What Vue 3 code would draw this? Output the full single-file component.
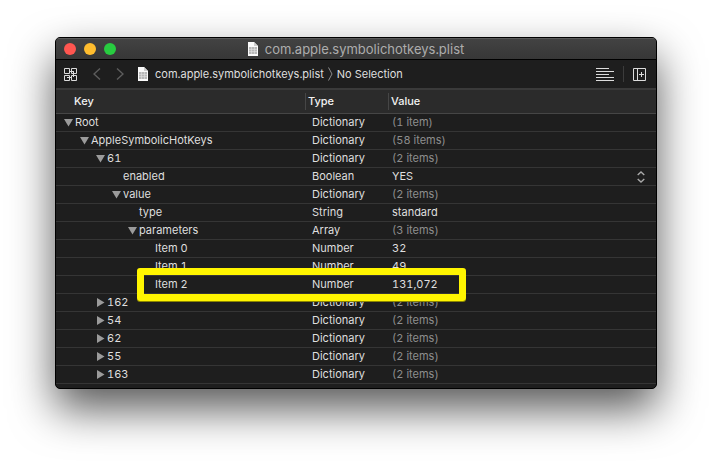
<script setup>
import { computed, reactive, ref } from 'vue'

const fileName = 'com.apple.symbolichotkeys.plist'

const nodes = reactive([
  { key: 'Root', level: 0, type: 'Dictionary', value: '(1 item)', open: true },
  { key: 'AppleSymbolicHotKeys', level: 1, type: 'Dictionary', value: '(58 items)', open: true },
  { key: '61', level: 2, type: 'Dictionary', value: '(2 items)', open: true },
  { key: 'enabled', level: 3, type: 'Boolean', value: 'YES' },
  { key: 'value', level: 3, type: 'Dictionary', value: '(2 items)', open: true },
  { key: 'type', level: 4, type: 'String', value: 'standard' },
  { key: 'parameters', level: 4, type: 'Array', value: '(3 items)', open: true },
  { key: 'Item 0', level: 5, type: 'Number', value: '32' },
  { key: 'Item 1', level: 5, type: 'Number', value: '49' },
  { key: 'Item 2', level: 5, type: 'Number', value: '131,072', marked: true },
  { key: '162', level: 2, type: 'Dictionary', value: '(2 items)', open: false },
  { key: '54', level: 2, type: 'Dictionary', value: '(2 items)', open: false },
  { key: '62', level: 2, type: 'Dictionary', value: '(2 items)', open: false },
  { key: '55', level: 2, type: 'Dictionary', value: '(2 items)', open: false },
  { key: '163', level: 2, type: 'Dictionary', value: '(2 items)', open: false },
])

const enabled = ref('YES')

const isGroup = (node) => node.open !== undefined

// Rows below a closed group stay hidden until the level returns to the group's own.
const rows = computed(() => {
  const visible = []
  let closedAt = Infinity
  for (const node of nodes) {
    if (node.level > closedAt) continue
    closedAt = node.open === false ? node.level : Infinity
    visible.push(node)
  }
  return visible
})
</script>

<template>
  <main class="window">
    <header class="titlebar">
      <div class="lights">
        <button class="light close" aria-label="Close"></button>
        <button class="light minimize" aria-label="Minimize"></button>
        <button class="light zoom" aria-label="Zoom"></button>
      </div>
      <h1 class="title">
        <svg class="doc" viewBox="0 0 10 14" aria-hidden="true">
          <path d="M0 0h6l4 4v10H0z" fill="#fafafa" />
          <path d="M6 0v4h4z" fill="#cfcfcf" />
          <path d="M1 5h8v7H1z" fill="#b8b8b8" />
          <path d="M1 7.500h8M1 9.500h8M3.500 5v7M6.500 5v7" stroke="#e0e0e0" stroke-width=".6" />
        </svg>
        {{ fileName }}
      </h1>
    </header>

    <nav class="toolbar">
      <button class="tool" aria-label="Related items">
        <svg width="13" height="13" viewBox="0 0 13 13" fill="none" stroke="#dcdcdc">
          <path d="M.5.5h5v5h-5zM7.5.5h5v5h-5zM.5 7.5h5v5h-5zM7.5 7.5h5v5h-5zM5 3.5h4M3 9.5h5M9.500 3v6" />
        </svg>
      </button>
      <button class="tool back" aria-label="Go back">
        <svg width="8" height="12" viewBox="0 0 8 12" fill="none" stroke="#5c5c5c" stroke-width="1.4">
          <path d="M7 .5 1 6l6 5.500" />
        </svg>
      </button>
      <button class="tool forward" aria-label="Go forward">
        <svg width="8" height="12" viewBox="0 0 8 12" fill="none" stroke="#5c5c5c" stroke-width="1.4">
          <path d="m1 .5 6 5.500-6 5.500" />
        </svg>
      </button>
      <a class="crumb" href="#">
        <svg class="doc" viewBox="0 0 10 14" aria-hidden="true">
          <path d="M0 0h6l4 4v10H0z" fill="#fafafa" />
          <path d="M6 0v4h4z" fill="#cfcfcf" />
          <path d="M1 5h8v7H1z" fill="#b8b8b8" />
          <path d="M1 7.500h8M1 9.500h8M3.500 5v7M6.500 5v7" stroke="#e0e0e0" stroke-width=".6" />
        </svg>
        {{ fileName }}
      </a>
      <svg class="chevron" width="5" height="14" viewBox="0 0 5 14" fill="none" stroke="#8c8c8c" aria-hidden="true">
        <path d="m.5.5 3.500 6.500-3.500 6.500" />
      </svg>
      <a class="selection" href="#">No Selection</a>
      <button class="tool lines" aria-label="Editor options">
        <svg width="18" height="13" viewBox="0 0 18 13" fill="none" stroke="#dcdcdc">
          <path d="M0 .5h13M0 3.500h18M0 6.500h13M0 9.500h18M0 12.500h18" />
        </svg>
      </button>
      <span class="divider"></span>
      <button class="tool" aria-label="Add editor">
        <svg width="13" height="13" viewBox="0 0 13 13" fill="none" stroke="#dcdcdc">
          <path d="M.5.5h12v12H.5zM4.500.5v12M6 6.500h5M8.500 4v5" />
        </svg>
      </button>
    </nav>

    <table class="plist">
      <thead>
        <tr>
          <th class="col-key"><span class="head">Key</span></th>
          <th class="col-type"><span class="head">Type</span></th>
          <th><span class="head">Value</span></th>
        </tr>
      </thead>
      <tbody>
        <tr v-for="(node, i) in rows" :key="i">
          <td class="key-cell">
            <div class="key" :style="{ paddingLeft: 8 + node.level * 16 + 'px' }">
              <button
                v-if="isGroup(node)"
                class="toggle"
                :aria-expanded="node.open"
                :aria-label="node.key"
                @click="node.open = !node.open"
              >
                <svg width="9" height="9" viewBox="0 0 9 9" fill="#9b9b9b">
                  <path v-if="node.open" d="M0 1h9L4.500 8.500z" />
                  <path v-else d="M1 0v9l7.500-4.500z" />
                </svg>
              </button>
              <span v-else class="toggle"></span>
              <span>{{ node.key }}</span>
            </div>
            <div v-if="node.marked" class="marker"></div>
          </td>
          <td class="type">{{ node.type }}</td>
          <td v-if="node.type === 'Boolean'" class="value">
            <div class="picker">
              <select v-model="enabled" :aria-label="node.key">
                <option>YES</option>
                <option>NO</option>
              </select>
              <svg width="8" height="13" viewBox="0 0 8 13" fill="none" stroke="#a8a8a8" stroke-width="1.4" aria-hidden="true">
                <path d="M.7 5 4 2l3.300 3M.7 9 4 12l3.300-3" />
              </svg>
            </div>
          </td>
          <td v-else class="value" :class="{ count: isGroup(node) }">{{ node.value }}</td>
        </tr>
      </tbody>
    </table>
  </main>
</template>

<style>
body {
  background: #fff;
}
</style>

<style scoped>
.window {
  margin: 37px 55px 73px;
  padding-bottom: 4px;
  overflow: hidden;
  border: 1px solid #000;
  border-radius: 5px;
  background: #1e1e1e;
  box-shadow: 0 20px 44px rgba(0, 0, 0, 0.66);
  color: #dfdfdf;
  font: 11px/18px Inter, 'Liberation Sans', sans-serif;
  font-variant-numeric: tabular-nums;
}

button {
  display: block;
  padding: 0;
  border: 0;
  background: none;
}

svg {
  display: block;
  flex: none;
}

a {
  color: inherit;
  text-decoration: none;
}

.titlebar {
  display: grid;
  grid-template-columns: 1fr auto 1fr;
  align-items: center;
  height: 21px;
  padding: 0 8px;
  border-bottom: 1px solid #000;
  background: linear-gradient(#434343, #373737);
  box-shadow: inset 0 1px #5a5a5a;
}

.lights {
  display: flex;
  gap: 8px;
}

.light {
  width: 12px;
  height: 12px;
  border-radius: 50%;
}

.close {
  background: #ff5650;
}

.minimize {
  background: #ffbd2e;
}

.zoom {
  background: #28cc40;
}

.title {
  display: flex;
  align-items: center;
  gap: 7px;
  margin: 0;
  color: #adadad;
  font-size: 13px;
  font-weight: 400;
}

.doc {
  width: 10px;
  height: 14px;
}

.toolbar {
  display: flex;
  align-items: center;
  height: 28px;
  padding: 0 10px 0 8px;
  border-bottom: 2px solid #3a3a3a;
}

.back {
  margin-left: 16px;
}

.forward {
  margin-left: 15px;
}

.crumb {
  display: flex;
  align-items: center;
  gap: 7px;
  margin-left: 14px;
}

.chevron {
  margin: 0 4px;
}

.lines {
  margin-left: auto;
}

.divider {
  width: 1px;
  height: 16px;
  margin: 0 9px;
  background: #3c3c3c;
}

.plist {
  width: 100%;
  table-layout: fixed;
  border-spacing: 0;
}

th {
  height: 23px;
  padding: 0;
  border-bottom: 1px solid #464646;
  background: #2b2b2b;
  color: #f2f2f2;
  font-weight: 500;
  text-align: left;
}

.head {
  display: block;
  padding-left: 2px;
  border-left: 1px solid #464646;
  line-height: 17px;
}

.col-key {
  width: 249px;
}

.col-key .head {
  padding-left: 18px;
  border-left: 0;
}

.col-type {
  width: 83px;
}

td {
  height: 17px;
  padding: 0;
  border-bottom: 1px solid #353535;
  line-height: 17px;
}

.key-cell {
  position: relative;
}

.key {
  display: flex;
  align-items: center;
  gap: 2px;
}

.toggle {
  flex: none;
  width: 9px;
}

.type {
  padding-left: 7px;
}

.value {
  padding-left: 4px;
}

.count {
  color: #8e8e8e;
}

.picker {
  display: flex;
  align-items: center;
  padding-right: 11px;
}

select {
  flex: 1;
  height: 17px;
  padding: 0;
  border: 0;
  appearance: none;
  background: none;
  color: inherit;
  font: inherit;
}

.marker {
  position: absolute;
  z-index: 1;
  top: -8px;
  left: 81px;
  box-sizing: border-box;
  width: 329px;
  height: 33px;
  border: 7px solid #fff500;
  border-radius: 3px;
  box-shadow: 0 1px #8b8600;
  pointer-events: none;
}
</style>
